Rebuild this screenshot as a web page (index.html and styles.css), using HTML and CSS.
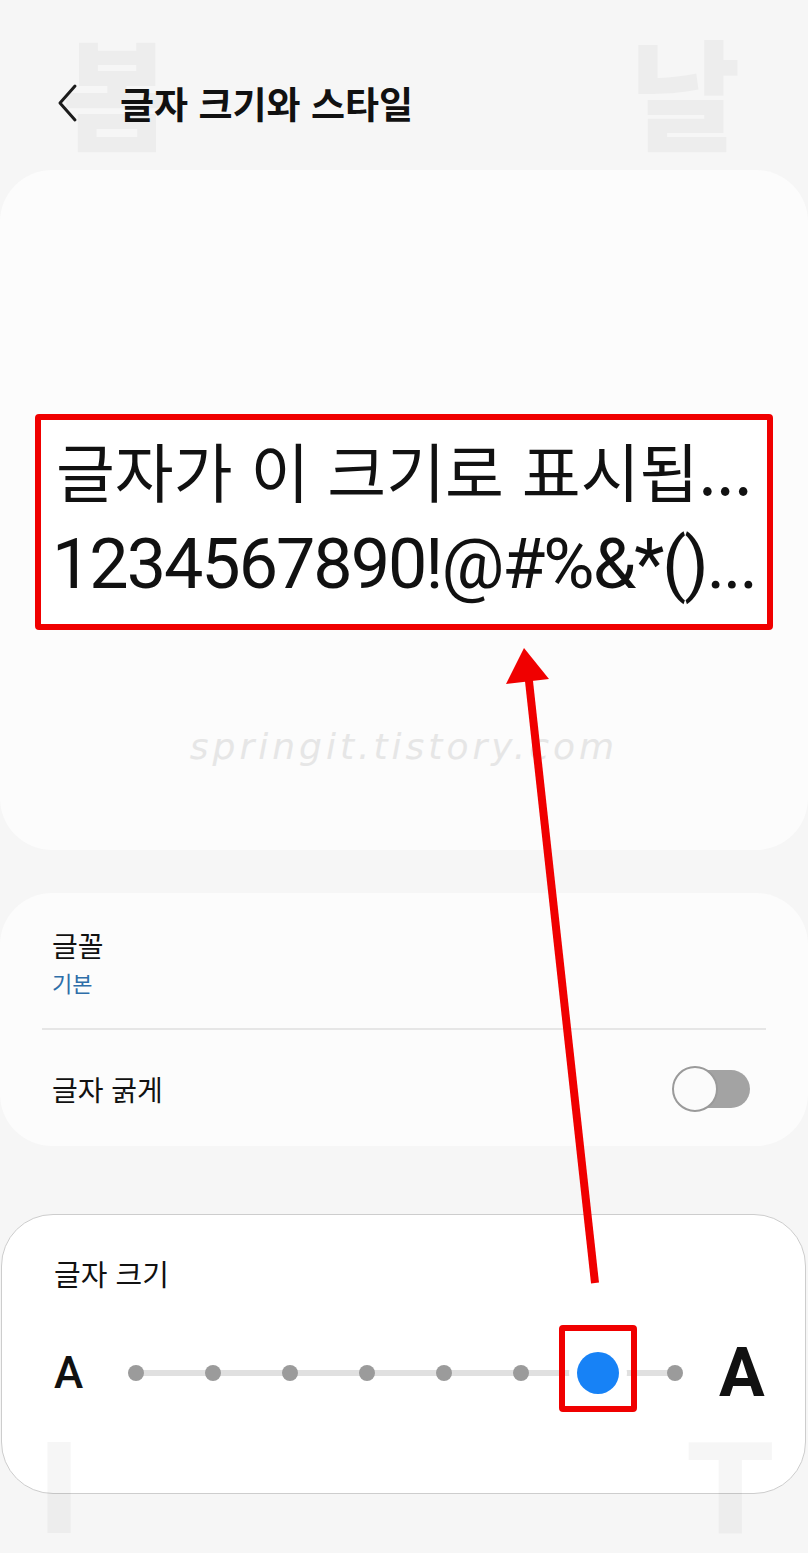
FILE: index.html
```html
<!DOCTYPE html>
<html lang="ko">
<head>
  <meta charset="UTF-8">
  <meta name="viewport" content="width=device-width, initial-scale=1.0">
  <title>글자 크기와 스타일</title>
  <link rel="stylesheet" href="styles.css">
</head>
<body>

  <div class="screen">
    <!-- 배경 워터마크 글자 -->
    <span class="mark mark-tl">봄</span>
    <span class="mark mark-tr">날</span>
    <span class="mark mark-bl">I</span>
    <span class="mark mark-br">T</span>

    <div class="header">
      <svg class="back" width="22" height="40" viewBox="0 0 22 40">
        <path d="M19 3 L4 20 L19 37" fill="none" stroke="#1c1c1c" stroke-width="3" stroke-linecap="round" stroke-linejoin="round"/>
      </svg>
      <h1>글자 크기와 스타일</h1>
    </div>

    <div class="card preview">
      <div class="preview-box">
        <p class="line-ko">글자가 이 크기로 표시됩...</p>
        <p class="line-num">1234567890!@#%&amp;*()...</p>
      </div>
      <div class="watermark">springit.tistory.com</div>
    </div>

    <div class="card options">
      <div class="row">
        <div class="label">글꼴</div>
        <div class="sub">기본</div>
      </div>
      <div class="divider"></div>
      <div class="row row-toggle">
        <div class="label">글자 굵게</div>
        <span class="toggle"><span class="knob"></span></span>
      </div>
    </div>

    <div class="card size">
      <div class="label">글자 크기</div>
      <div class="slider-row">
        <span class="a-small">A</span>
        <div class="track">
          <span class="step"><span class="dot"></span></span>
          <span class="step"><span class="dot"></span></span>
          <span class="step"><span class="dot"></span></span>
          <span class="step"><span class="dot"></span></span>
          <span class="step"><span class="dot"></span></span>
          <span class="step"><span class="dot"></span></span>
          <span class="step current"><span class="thumb"></span><span class="highlight"></span></span>
          <span class="step"><span class="dot"></span></span>
        </div>
        <span class="a-big">A</span>
      </div>
    </div>

    <!-- 빨간 화살표 표시 -->
    <svg class="arrow" width="808" height="1553" viewBox="0 0 808 1553">
      <line x1="595" y1="1283" x2="528" y2="672" stroke="#f00000" stroke-width="8"/>
      <polygon points="524,648 506,684 549,679" fill="#f00000"/>
    </svg>
  </div>

</body>
</html>
```

FILE: styles.css
```css
body {
  margin: 0;
  background: #f6f6f6;
  font-family: 'Noto Sans CJK KR', sans-serif;
  color: #111;
}
.screen {
  position: relative;
  width: 808px;
  height: 1553px;
  overflow: hidden;
}
.mark {
  position: absolute;
  font-family: 'Noto Sans CJK KR', sans-serif;
  font-weight: 900;
  font-size: 120px;
  line-height: 1;
  color: rgba(0, 0, 0, 0.035);
  pointer-events: none;
}
.mark-tl { left: 62px; top: 30px; }
.mark-tr { left: 630px; top: 30px; }
.mark-bl { left: 36px; top: 1428px; font-family: 'DejaVu Sans', sans-serif; font-size: 124px; }
.mark-br { left: 688px; top: 1428px; font-family: 'DejaVu Sans', sans-serif; font-size: 124px; }

.header {
  height: 170px;
  display: flex;
  align-items: center;
  padding-left: 56px;
  padding-top: 36px;
  box-sizing: border-box;
}
.header h1 {
  margin: 0 0 0 42px;
  font-size: 37px;
  font-weight: 700;
  color: #111;
}

.card {
  background: #fcfcfc;
  border-radius: 52px;
}
.preview {
  height: 680px;
  display: flex;
  flex-direction: column;
  align-items: center;
  padding-top: 244px;
  box-sizing: border-box;
}
.preview-box {
  width: 738px;
  height: 216px;
  border: 6px solid #f00000;
  border-radius: 4px;
  box-sizing: border-box;
  background: #fff;
  text-align: center;
}
.preview-box p {
  margin: 0;
  white-space: nowrap;
  color: #111;
}
.line-ko {
  font-size: 64px;
  line-height: 95px;
  margin-top: 2px !important;
}
.line-num {
  font-family: Roboto, 'Noto Sans CJK KR', sans-serif;
  font-size: 70px;
  line-height: 95px;
  letter-spacing: -2px;
}
.watermark {
  margin-top: 96px;
  font-family: 'DejaVu Sans', sans-serif;
  font-style: italic;
  font-size: 36px;
  letter-spacing: 4px;
  color: #e6e6e6;
}

.options {
  margin-top: 43px;
  height: 253px;
  padding: 32px 42px 0;
  box-sizing: border-box;
}
.row {
  padding: 0 10px;
}
.label {
  font-size: 28px;
  line-height: 40px;
  color: #111;
}
.sub {
  font-size: 22px;
  line-height: 30px;
  color: #2e6ea9;
  margin-top: 2px;
}
.divider {
  height: 2px;
  background: #e6e6e6;
  margin-top: 31px;
}
.row-toggle {
  display: flex;
  align-items: center;
  justify-content: space-between;
  height: 118px;
  padding-right: 16px;
}
.toggle {
  position: relative;
  width: 76px;
  height: 38px;
  border-radius: 19px;
  background: #a3a3a3;
}
.knob {
  position: absolute;
  left: -2px;
  top: -4px;
  width: 42px;
  height: 42px;
  border-radius: 50%;
  background: #fbfbfb;
  border: 2px solid #9a9a9a;
}

.size {
  margin-top: 68px;
  height: 280px;
  background: #fff;
  border: 1px solid #cdcdcd;
  margin-left: 1px;
  margin-right: 2px;
  padding: 38px 0 0 52px;
  box-sizing: border-box;
}
.size .label {
  font-size: 29px;
}
.slider-row {
  display: flex;
  align-items: center;
  margin-top: 46px;
}
.a-small {
  width: 43px;
  font-family: Roboto, sans-serif;
  font-size: 44px;
  font-weight: 500;
  line-height: 1;
}
.track {
  position: relative;
  display: grid;
  grid-template-columns: repeat(8, 77px);
  height: 50px;
  align-items: center;
  justify-items: center;
}
.track::before {
  content: "";
  position: absolute;
  left: 38px;
  right: 38px;
  top: 22px;
  height: 6px;
  background: #e0e0e0;
}
.step {
  position: relative;
  display: flex;
  align-items: center;
  justify-content: center;
}
.dot {
  width: 16px;
  height: 16px;
  border-radius: 50%;
  background: #9b9b9b;
}
.thumb {
  width: 42px;
  height: 42px;
  border-radius: 50%;
  background: #1782f6;
  box-shadow: 0 0 0 8px #fff;
}
.highlight {
  position: absolute;
  left: -18px;
  top: -27px;
  width: 78px;
  height: 87px;
  border: 6px solid #f00000;
  border-radius: 4px;
  box-sizing: border-box;
}
.a-big {
  margin-left: 6px;
  font-family: Roboto, sans-serif;
  font-size: 68px;
  font-weight: 700;
  line-height: 1;
}

.arrow {
  position: absolute;
  left: 0;
  top: 0;
  pointer-events: none;
}
```
